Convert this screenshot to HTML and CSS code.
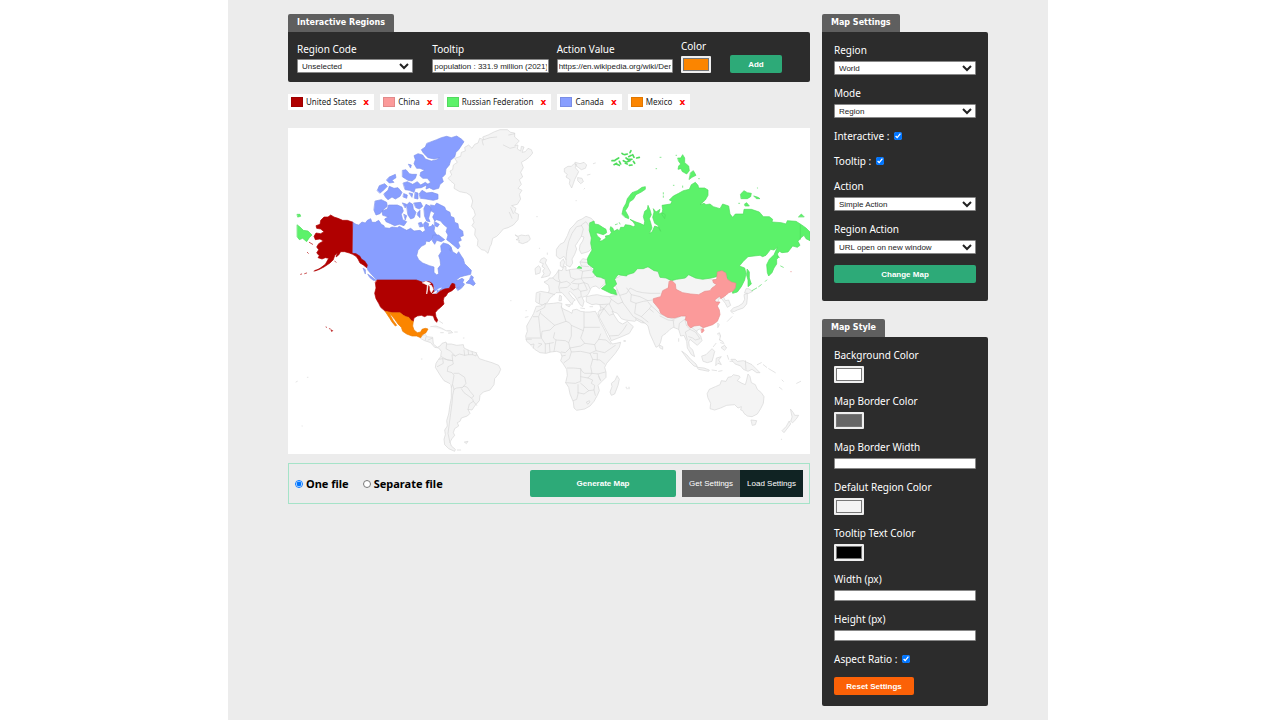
FILE: index.html
```html
<!DOCTYPE html>
<html lang="en">
<head>
    <meta charset="UTF-8">
    <meta name="viewport" content="width=device-width, initial-scale=1.0">
    <title>Interactive Map Generator</title>
    <link rel="stylesheet" href="styles.css">
</head>
<body>
    <div class="wrapper">
        <main class="main">
            <h2 class="tab">Interactive Regions</h2>
            <form class="panel region-form">
                <div class="field region-code">
                    <label for="region-code">Region Code</label>
                    <select id="region-code"><option>Unselected</option></select>
                </div>
                <div class="field">
                    <label for="tooltip-text">Tooltip</label>
                    <input type="text" id="tooltip-text" value="population : 331.9 million (2021)">
                </div>
                <div class="field">
                    <label for="action-value">Action Value</label>
                    <input type="text" id="action-value" value="https://en.wikipedia.org/wiki/Demographics">
                </div>
                <div class="field color-field">
                    <label for="region-color">Color</label>
                    <input type="color" id="region-color" value="#fb8500">
                </div>
                <button type="button" class="btn btn-add">Add</button>
            </form>

            <ul class="chips">
                <li><span class="swatch us"></span>United States<button type="button" aria-label="Remove United States">x</button></li>
                <li><span class="swatch cn"></span>China<button type="button" aria-label="Remove China">x</button></li>
                <li><span class="swatch ru"></span>Russian Federation<button type="button" aria-label="Remove Russian Federation">x</button></li>
                <li><span class="swatch ca"></span>Canada<button type="button" aria-label="Remove Canada">x</button></li>
                <li><span class="swatch mx"></span>Mexico<button type="button" aria-label="Remove Mexico">x</button></li>
            </ul>

            <svg class="map" viewBox="0 0 1566 978" role="img" aria-label="World map">
                <!-- greenland, iceland, svalbard, scandinavia, british isles -->
                <g class="land" transform="translate(576 -9)">
                    <path d="M24 30L8 36L12 44L-1 40L-6 54L-16 58L-24 70L-34 60L-46 67L-44 78L-56 82L-58 94L-76 100L-68 112L-80 120L-82 134L-90 138L-85 150L-96 160L-88 168L-76 178L-78 190L-61 200L-40 204L-28 212L-22 228L-26 245L-18 256L-14 270L-22 280L-18 292L-24 302L-14 312L-16 330L-6 345L-8 362L4 374L14 376L24 385L30 365L34 358L38 340L50 334L58 326L70 312L84 308L100 300L114 284L116 268L104 262L108 250L95 242L112 238L122 222L118 208L126 196L114 190L124 178L118 164L128 156L122 142L130 128L124 112L138 104L148 96L158 84L154 74L144 70L136 80L126 82L132 66L124 64L122 78L112 72L114 60L104 62L118 48L104 36L104 24L92 22L82 14L60 14L44 20Z"/>
                    <path d="M10 60L6 46L30 38L50 36M70 60L90 70L106 66M88 262L96 280M92 248L100 266M104 26L86 30"/>
                    <path d="M106 330L114 334L124 330L136 332L146 330L151 342L144 350L128 356L116 352L118 346L108 344L116 340Z"/>
                    <path d="M254 130L264 124L274 124L282 116L290 118L286 128L296 140L290 152L284 164L280 176L275 189L268 176L270 164L258 156L262 148L254 142ZM286 112L300 116L312 112L320 120L316 130L304 134L296 128L288 122ZM294 158L306 160L310 170L302 176L294 168ZM330 148L322 150M340 116L346 114M312 192L314 190M288 227h1M170 275h2M178 370h1M202 384v4M250 350"/>
                    <path d="M230 372L240 358L252 352L262 332L270 312L282 300L292 288L306 282L318 274L334 280L342 290L330 296L332 310L336 336L334 352L340 366L325 380L304 386L298 374L300 360L308 348L312 336L304 334L294 350L286 362L290 372L284 388L276 402L278 414L270 426L258 420L258 404L252 394L240 402L230 394Z"/>
                    <path d="M258 404L260 380L266 350L276 325L290 305L304 302M304 334L310 312L304 300L318 290L332 310"/>
                    <path d="M184 402L192 398L200 404L196 414L204 428L212 442L208 452L194 456L184 458L192 446L188 438L194 430L186 424L190 416L180 412ZM166 430L176 422L182 430L180 444L168 448ZM242 410L250 402L254 412L248 428L242 424Z"/>
                </g>
                <!-- europe and africa -->
                <g class="land" transform="translate(666 246)">
                    <path d="M80 248L92 244L115 248L118 240L116 226L102 216L114 210L118 204L128 204L140 190L146 180L156 182L162 168L168 170L168 182L184 178L206 176L214 168L210 156L218 146L236 150L244 176L258 186L262 196L284 208L286 220L276 228L268 236L258 228L248 230L242 236L236 250L230 258L216 262L222 274L218 290L210 284L202 270L194 258L180 244L176 248L186 262L196 270L190 274L186 284L180 276L168 262L156 248L138 248L130 256L120 264L112 278L98 285L88 282L78 276Z"/>
                    <path d="M90 250L88 280M115 248L134 254M128 204L138 212L150 216L146 232L150 246M146 180L146 206L152 218L170 214L182 222L172 232L150 234M178 180L182 202L196 208L184 218M206 178L218 184L214 206L196 208M214 206L222 218L206 222L188 220M218 184L244 180M222 218L232 240L212 244L204 236L206 222M204 236L190 240L182 234M212 244L214 260L204 264M214 168L236 170M210 156L236 158M216 204L250 202L258 190M222 218L234 222L240 236"/>
                    <path d="M150 256L154 258L154 272L148 272ZM168 284L182 284L178 290ZM212 294L224 296M240 290h8"/>
                    <path d="M80 289L92 288L104 282L130 280L144 278L156 280L154 292L162 298L176 304L186 310L188 300L200 298L212 304L226 306L240 306L256 304L264 318L270 334L284 360L292 378L300 392L306 402L318 400L332 397L328 412L316 430L302 446L290 460L284 472L288 486L288 502L276 514L264 526L268 542L262 556L252 574L240 588L224 597L200 601L192 594L190 576L180 552L176 532L167 518L172 496L170 478L160 462L152 452L156 440L152 428L140 424L122 426L108 430L90 428L74 418L62 404L50 394L47 378L52 364L50 348L60 330L70 312Z"/>
                    <path d="M80 305L104 292L106 282M70 320L86 320L92 304M92 310L134 346L120 360L96 364L94 384L52 384M86 322L92 380M134 346L168 334L160 310L154 290M168 334L178 338L184 346L184 378L176 398L166 392L138 390L130 384L134 368M222 306L222 352L268 352M222 352L220 362L184 346M220 362L212 384L224 400L254 404L266 388L272 372M266 388L288 390L302 402M254 404L258 422L284 428L316 406M138 390L132 424M118 400L120 426M106 402L106 428M94 384L106 402L130 398M86 400L96 402L84 412M62 404L72 402L70 414M48 388L64 388M176 398L180 414L166 428L154 426M180 414L212 408L224 400M180 414L184 426L212 424L240 430L258 422M184 426L178 446L162 458M166 436L156 438M240 430L248 448L242 470L246 490L224 490L216 484L212 476L190 474L172 474M248 448L270 450L284 462M250 430L262 430L262 450M246 490L264 492L286 486M264 492L272 512L266 500M212 476L212 514L196 520L167 518M212 500L234 504L246 490M234 504L248 510L244 520L254 526L252 540L236 542L222 528L212 520M204 524L204 552L200 568L190 572M204 548L222 552L236 542M252 540L256 556M230 576L238 572L240 576L234 582Z"/>
                    <path d="M322 498L328 508L324 526L314 552L304 556L300 546L306 530L304 520L314 512ZM342 392h4M350 536h2M356 532h2M48 302h1M46 322l8 -2M2 272h1"/>
                    <!-- middle east -->
                    <path d="M230 260L246 256L262 254L278 258L298 260L322 256L320 240L328 230L318 210L334 198L374 200L372 178L404 168L424 172L450 190L520 240L470 300L440 320L414 340L394 338L380 330L374 334L346 330L334 326L322 310L306 304L314 318L326 336L338 342L352 334L370 350L358 370L330 382L304 392L298 378L284 352L268 322L264 308L272 296L270 284L258 282L246 284L230 276Z"/>
                    <path class="water" d="M326 236L340 230L348 236L342 246L350 258L356 264L352 276L342 276L336 262L328 250Z"/>
                    <path d="M270 284L298 282L304 268L298 260M298 282L310 306M270 302L282 296L298 316L310 312M272 290L282 296L292 284M282 296L266 320M298 378L326 376L340 360L350 344M304 268L324 282L338 276M356 264L374 270L382 288L374 300L378 330M354 240L366 244L388 262L402 258L414 266M344 224L368 222L384 244L396 250L410 246L430 250M382 288L396 280L416 276L410 290L402 306L380 316M402 306L392 320L400 338"/>
                </g>
                <!-- south and east asia, oceania -->
                <g class="land" transform="translate(996 396)">
                    <path d="M-20 60L40 24L74 20L94 24L120 40L150 58L198 52L204 42L216 48L240 52L278 58L300 60L330 90L310 110L316 122L326 120L332 136L322 142L316 130L300 110L280 160L250 203L232 210L230 216L242 228L246 242L232 256L222 248L210 238L206 246L208 260L218 270L224 290L214 284L202 264L200 244L192 226L182 228L176 208L160 202L150 208L138 220L126 228L122 246L116 258L108 262L100 244L90 222L84 198L78 192L68 184L40 170L10 130Z"/>
                    <path d="M0 106L20 100L30 84L50 94L68 98L90 100L120 100M20 84L34 104L60 110L84 122L98 120M34 104L32 124L48 130L70 124L84 122M48 130L44 160L64 170L88 146L94 138L84 126M64 170L84 186M94 138L108 150L120 162L160 178L180 170M88 146L100 156M120 168L144 180L162 182M160 184L162 202M176 208L178 190L194 178M194 178L200 198L210 208L196 216L202 240M210 208L226 216L240 236L226 240L218 234L206 230M214 202L230 214"/>
                    <path d="M120 256L128 260L128 268L120 264ZM176 236v8M186 274L200 284L212 298L228 312L232 320L222 318L206 302ZM232 322L252 324L268 330L266 334L236 328ZM276 330L290 332M296 334L306 332M246 288L258 284L268 274L276 266L284 274L280 290L276 304L262 308L250 304ZM290 294L304 290L296 300L304 314L294 310L288 316ZM292 222L298 218L302 228L298 240L308 244L312 252M302 248L308 250M304 262L314 256L320 264L314 270ZM280 260L288 250M322 286L326 298M330 304h8M334 298L346 298L352 304L370 302L396 314L408 326L420 338L410 338L396 328L384 334L370 328L362 318L346 312ZM376 302L378 328M412 314L424 308M430 314L440 322M446 326L466 338M478 382L486 388M530 370L542 364M486 360l4 4M294 190L298 194L294 202ZM322 184L336 170"/>
                    <path d="M332 152L340 144L356 138L368 130L374 118L372 104L382 100L382 114L380 132L370 144L352 150L344 154ZM374 98L378 86L386 86L398 94L386 100ZM334 156L340 160"/>
                    <path d="M262 400L268 388L286 380L300 374L304 362L318 364L324 352L334 350L340 344L358 348L360 352L352 362L366 370L376 374L380 360L384 342L390 350L394 368L406 374L412 388L424 398L432 410L430 430L422 446L412 462L396 470L382 468L372 460L368 452L362 450L364 440L354 444L344 434L320 436L302 444L284 450L270 446L272 430L264 414ZM394 480L410 482L406 494L398 496Z"/>
                    <path d="M512 448L520 458L524 466L536 466L528 478L518 488L512 484L516 472ZM508 484L512 492L500 508L492 518L486 512L498 500ZM18 382h2M26 386h2M484 538h1M12 244h4"/>
                </g>
                <!-- central and south america -->
                <g class="land" transform="translate(0 366)">
                    <path d="M398 264L404 256L414 254L416 260L434 262L436 282L448 292L456 288L462 280L474 276L476 282L490 282L506 286L526 284L528 294L544 302L564 308L574 326L592 332L612 338L632 346L638 358L632 372L620 386L618 404L606 420L586 426L576 436L574 452L560 468L552 480L540 478L546 490L538 498L520 504L516 514L508 518L512 528L500 536L496 548L500 556L492 566L486 576L490 588L502 598L500 604L482 596L470 584L468 568L472 554L470 540L478 528L476 512L482 492L486 464L490 444L490 412L488 402L468 392L458 378L442 352L444 340L452 328L458 320L460 304L452 294L440 292L428 278L410 272Z"/>
                    <path d="M414 260L412 270M420 270L434 264M460 320L478 330L494 332L496 342L480 350L478 364L492 368L498 376L494 400L490 412M452 328L464 326L466 340L448 350M464 326L494 332M494 332L492 314L502 318L514 312L530 316L528 300M476 282L474 296L488 304L502 318M540 300L542 314L530 316M552 304L554 314L542 314M566 308L564 318L554 314M498 370L512 370L530 382L534 400L524 412L506 414L498 418L494 404M524 412L528 408L538 412L546 424L558 438L550 444L528 428L520 416M550 444L554 448L556 454L544 462L540 478M556 454L566 466M498 418L494 436L492 460L488 490L484 520L480 550L486 578"/>
                    <path d="M428 230L444 228L460 234L474 242M476 242L488 242L494 248L482 250M458 248L466 248M500 246h8M452 212L464 220M526 264h2M400 327h2M24 396L28 394M58 382h2M42 528h1M530 576L540 574L536 580ZM508 600h10"/>
                </g>
                <!-- canada -->
                <g class="canada" transform="translate(0 -9)">
                    <path d="M193 291L204 298L212 300L222 291L232 294L238 286L248 281L252 292L262 292L272 286L280 298L288 302L290 308L304 310L312 306L328 308L334 304L348 312L356 316L368 310L378 318L396 316L404 322L412 316L406 298L412 290L422 296L420 306L430 304L434 298L440 306L438 318L446 330L434 340L424 350L414 348L412 358L400 364L390 376L386 392L392 404L404 414L424 422L438 426L438 442L446 450L452 446L450 430L458 420L456 404L452 392L460 380L458 362L466 354L480 358L488 364L494 380L506 388L512 380L518 390L526 402L530 416L544 430L550 436L548 448L530 452L516 456L504 466L510 466L522 460L528 464L524 472L530 478L518 484L508 492L504 484L500 476L492 480L488 488L474 492L460 494L446 504L438 508L436 498L440 488L430 478L416 474L402 472L386 465L266 465L258 456L250 448L240 436L236 424L226 410L214 398L204 388L193 385Z"/>
                    <path d="M550 452L556 456L554 464L562 476L556 482L546 476L534 474L544 464ZM506 488L516 486L528 480L520 490L510 496ZM226 430L232 434L232 446ZM240 448L252 456L264 466L256 466L246 458Z"/>
                    <path d="M430 50L446 44L460 38L476 34L490 38L506 33L520 42L528 50L520 62L512 74L504 82L500 96L488 106L484 120L474 132L472 148L462 158L466 170L456 178L452 190L436 194L424 188L414 192L416 180L428 172L418 160L404 160L396 152L398 142L410 136L396 130L386 130L378 116L382 104L378 92L390 86L404 90L412 102L430 108L446 104L454 98L438 102L420 98L406 84L400 74L412 66L416 56Z"/>
                    <path d="M394 206L402 196L416 204L432 202L450 208L450 222L436 226L414 222L398 220ZM344 136L354 134L364 146L372 148L386 148L382 160L372 168L360 166L344 156ZM362 118L370 120L368 128ZM346 174L358 170L374 178L388 170L398 180L412 172L420 178L400 188L382 190L378 202L364 196L352 194ZM304 156L322 148L324 158L312 166L318 172L304 174L296 166ZM268 196L274 182L290 176L298 184L284 198L276 204ZM288 206L300 196L304 184L318 190L330 188L342 202L336 214L322 222L312 216L300 224L292 216ZM348 206L358 210L356 220L346 216ZM364 204L374 206L372 216ZM382 202L390 204L390 222L380 220Z"/>
                    <path d="M262 228L280 224L296 232L298 244L286 254L276 266L264 270L258 256ZM284 270L282 258L298 252L302 240L316 240L328 240L342 246L346 258L340 268L344 284L356 290L348 302L334 298L320 302L308 296L294 290L290 282L300 276ZM344 234L356 238L352 248ZM356 240L364 232L374 238L376 252L384 262L378 278L368 282L360 270ZM378 234L398 232L404 244L394 252L384 248ZM390 262L396 256L396 278L388 270ZM392 294L400 292L406 304L396 306ZM348 268L356 272L352 284Z"/>
                    <path d="M408 250L414 238L426 244L430 254L426 264L422 280L426 290L416 288L410 274ZM428 240L440 242L446 234L458 240L470 246L474 256L486 262L488 274L498 278L500 292L510 296L512 310L524 318L526 332L516 336L520 346L510 350L516 364L510 372L496 360L484 350L476 344L480 330L474 320L478 308L466 298L458 288L446 284L440 288L434 276L440 264L430 258ZM440 290L454 298L448 306L440 302ZM436 330L452 330L470 344L460 350L446 346L440 358L432 346ZM484 372L490 368L488 378Z"/>
                </g>
                <!-- united states -->
                <g class="usa" transform="translate(0 -9)">
                    <path d="M193 291L178 286L164 286L150 280L138 276L128 270L120 276L108 276L98 286L96 298L84 302L86 310L98 312L108 320L98 326L84 324L78 334L82 344L96 342L106 348L92 356L86 366L92 374L86 384L94 392L90 398L102 402L112 398L122 400L112 418L96 430L80 438L92 434L108 426L126 414L136 404L140 392L148 384L144 396L152 390L158 380L170 380L184 384L194 388L204 394L210 402L216 414L226 420L236 428L238 420L230 408L220 402L216 394L204 386L193 385Z"/>
                    <path d="M64 352L74 358M58 382l3 3M38 448l3 -1M50 446l6 -2M78 438l6 -3M140 408l4 4"/>
                </g>
                <g class="usa" transform="translate(0 366)">
                    <path d="M268 90L385 90L396 94L404 97L414 94L426 96L434 102L436 112L438 124L436 132L446 132L458 122L470 117L484 115L488 106L492 100L500 102L502 113L492 122L480 128L474 138L468 142L466 152L468 162L458 172L448 180L442 188L444 200L449 210L446 217L440 210L436 198L426 196L418 196L410 200L400 196L388 198L378 204L376 214L370 212L362 202L354 200L346 196L336 188L312 188L292 184L278 172L272 160L264 146L260 130L264 114L262 98Z"/>
                    <path class="lake" d="M404 98L414 94L428 100L420 106L418 122L416 132L418 106ZM422 104L430 106L436 118L430 128L426 120L426 110ZM434 130L446 122L444 128ZM450 118L460 114L452 120Z"/>
                    <path d="M114 231l2 1M124 236l3 1M130 240L134 242L132 244Z"/>
                </g>
                <path class="mexico" transform="translate(0 366)" d="M292 184L312 188L336 188L346 196L354 200L362 202L370 212L376 214L374 228L378 240L388 248L398 246L402 238L412 235L420 237L414 248L406 253L402 256L398 263L386 258L372 258L356 252L344 244L340 232L330 222L320 208L310 196L304 188L308 198L316 212L326 226L322 228L312 216L306 206L298 194Z"/>
                <!-- russia -->
                <g class="russia" transform="translate(876 36)">
                    <path d="M30 248L42 243L44 252L56 254L68 262L78 268L80 278L70 284L56 280L48 278L52 288L62 296L58 304L66 302L78 294L76 288L88 286L94 278L90 268L92 260L98 264L102 274L112 268L118 272L122 262L132 262L136 254L150 256L160 260L166 256L160 246L150 238L168 246L180 250L192 256L194 244L190 230L194 214L202 208L204 196L210 210L214 224L208 236L212 248L216 264L208 280L216 276L224 258L236 262L242 274L234 256L224 250L218 232L222 216L220 206L228 216L240 208L236 222L246 218L256 224L254 236L246 224L248 208L246 196L272 192L276 184L268 180L280 168L296 160L310 152L328 148L334 134L346 127L354 136L356 144L374 144L384 150L384 166L376 180L360 194L372 190L378 194L390 192L400 200L420 206L428 192L446 198L450 222L458 232L466 222L490 222L492 208L514 208L538 216L550 230L568 230L578 238L576 246L604 248L618 252L622 242L648 244L664 254L678 264L690 276L690 302L678 296L672 286L662 294L654 304L660 316L652 322L638 318L624 336L606 338L598 334L592 342L596 352L590 358L590 372L582 384L576 398L566 408L562 398L560 374L568 358L582 344L592 322L582 330L572 328L558 346L548 350L540 346L504 350L490 364L478 378L494 384L498 400L494 420L484 440L472 456L458 460L456 446L468 432L458 432L444 422L436 398L424 392L414 398L410 410L394 414L368 418L346 414L326 404L316 414L290 418L274 422L258 414L240 412L234 394L222 392L204 380L190 386L172 386L162 398L142 404L140 408L114 404L104 418L110 432L98 444L106 450L110 464L92 460L64 446L78 434L76 418L62 412L50 410L38 396L42 386L24 372L22 356L28 344L36 330L32 310L34 294L28 272Z"/>
                    <path d="M126 222L130 204L138 190L142 176L156 158L172 152L186 142L196 140L196 148L184 156L168 164L160 178L148 186L144 200L136 212L146 230L146 236L136 232Z"/>
                    <path d="M294 54L302 54L308 44L314 54L314 68L326 78L328 92L320 102L306 94L304 86L294 88L296 78L302 72L296 64ZM332 98L340 92L348 106L336 112L328 118ZM482 162L492 152L502 158L514 160L512 170L502 176L484 176ZM522 168L534 172L540 176L530 176ZM494 192L500 188L508 198L496 198ZM656 230L664 222L672 230ZM502 388L508 396L508 414L514 432L504 440L504 420L500 406Z"/>
                    <path class="isles" d="M96 62l8 0M106 60l10 -6M102 74l8 -4M108 72l10 4M118 64l4 8M126 40l4 3M134 44l8 -2M138 54l8 6M146 50l8 -4M140 66l10 -4M136 70l6 2M150 38l3 -6M158 44l4 8M160 64l4 6M148 76l8 -1M170 54l8 -2M146 58l10 0M130 62l6 3"/>
                    <path d="M240 52h3M228 86h2M288 46h2M356 116h2M532 144h1M476 190h3M250 158v4M250 168v4M280 136h2M308 138v4M106 254l6 -2M118 248l2 4M516 452L530 444M536 440L544 434M556 424l4 -4M602 378L610 382M592 350l6 2M0 384h3"/>
                </g>
                <g class="russia" transform="translate(0 -9)">
                    <path d="M28 300L36 306L46 316L60 318L72 330L64 338L56 350L44 340L34 344L28 336ZM28 268L36 268L38 274L30 276ZM868 429L873 423L881 429Z"/>
                </g>
                <path class="seam" d="M1537 290V334"/>
                <!-- china -->
                <g class="china" transform="translate(996 396)">
                    <path d="M148 64L156 62L166 72L168 88L188 98L212 102L236 104L254 94L270 92L276 84L290 74L280 68L278 60L290 58L292 36L306 32L318 40L320 56L334 66L348 70L346 84L338 94L326 98L318 106L302 116L300 108L284 120L288 126L300 126L292 138L298 150L300 164L292 184L278 194L266 198L250 203L238 196L222 198L212 204L204 196L202 184L196 180L198 168L184 168L162 174L142 172L122 160L118 148L110 138L100 126L100 116L122 110L128 92L144 84Z"/>
                    <path d="M244 208L250 206L252 212L246 218ZM512 35h2"/>
                </g>
            </svg>

            <div class="actions">
                <label class="choice"><input type="radio" name="output" checked>One file</label>
                <label class="choice"><input type="radio" name="output">Separate file</label>
                <button type="button" class="btn btn-generate">Generate Map</button>
                <div class="btn-group">
                    <button type="button" class="btn-get">Get Settings</button>
                    <button type="button" class="btn-load">Load Settings</button>
                </div>
            </div>
        </main>

        <aside class="sidebar">
            <section>
                <h2 class="tab">Map Settings</h2>
                <div class="panel settings map-settings">
                    <div class="field">
                        <label for="region">Region</label>
                        <select id="region"><option>World</option></select>
                    </div>
                    <div class="field">
                        <label for="mode">Mode</label>
                        <select id="mode"><option>Region</option></select>
                    </div>
                    <div class="check">
                        <label for="interactive">Interactive :</label>
                        <input type="checkbox" id="interactive" checked>
                    </div>
                    <div class="check">
                        <label for="tooltip">Tooltip :</label>
                        <input type="checkbox" id="tooltip" checked>
                    </div>
                    <div class="field">
                        <label for="action">Action</label>
                        <select id="action"><option>Simple Action</option></select>
                    </div>
                    <div class="field">
                        <label for="region-action">Region Action</label>
                        <select id="region-action"><option>URL open on new window</option></select>
                    </div>
                    <button type="button" class="btn">Change Map</button>
                </div>
            </section>
            <section>
                <h2 class="tab">Map Style</h2>
                <div class="panel settings">
                    <div class="field">
                        <label for="bg-color">Background Color</label>
                        <input type="color" id="bg-color" value="#ffffff">
                    </div>
                    <div class="field">
                        <label for="border-color">Map Border Color</label>
                        <input type="color" id="border-color" value="#666666">
                    </div>
                    <div class="field">
                        <label for="border-width">Map Border Width</label>
                        <input type="text" id="border-width">
                    </div>
                    <div class="field">
                        <label for="default-color">Defalut Region Color</label>
                        <input type="color" id="default-color" value="#f4f4f4">
                    </div>
                    <div class="field">
                        <label for="tooltip-color">Tooltip Text Color</label>
                        <input type="color" id="tooltip-color" value="#000000">
                    </div>
                    <div class="field">
                        <label for="width">Width (px)</label>
                        <input type="text" id="width">
                    </div>
                    <div class="field">
                        <label for="height">Height (px)</label>
                        <input type="text" id="height">
                    </div>
                    <div class="check">
                        <label for="aspect">Aspect Ratio :</label>
                        <input type="checkbox" id="aspect" checked>
                    </div>
                    <button type="button" class="btn btn-reset">Reset Settings</button>
                </div>
            </section>
        </aside>
    </div>
</body>
</html>
```
FILE: styles.css
```css
* {
    margin: 0;
    padding: 0;
    box-sizing: border-box;
}
body {
    padding-right: 4px;
    background: #fff;
    font-family: "Noto Sans", sans-serif;
    font-size: 10px;
    line-height: 14px;
}
.wrapper {
    display: grid;
    grid-template-columns: minmax(0, 1fr) 166px;
    gap: 12px;
    align-items: start;
    max-width: 820px;
    min-height: 100vh;
    margin: 0 auto;
    padding: 14px 60px;
    background: #ececec;
}
.sidebar {
    display: grid;
    gap: 18px;
}

/* panels */
.tab {
    width: fit-content;
    padding: 0 9px;
    border-radius: 2px 2px 0 0;
    background: #5f5f5f;
    color: #fff;
    font-family: "DejaVu Sans", sans-serif;
    font-size: 8px;
    line-height: 18px;
}
.panel {
    background: #2c2c2c;
    color: #fff;
    border-radius: 0 2px 2px 2px;
}
.settings {
    display: flex;
    flex-direction: column;
    gap: 11px;
    padding: 11px 12px;
}
.map-settings {
    padding-bottom: 18px;
}
.region-form {
    display: flex;
    align-items: flex-end;
    gap: 8px;
    padding: 7px 28px 9px 9px;
}
.region-form .field {
    flex: 1;
    min-width: 0;
    gap: 3px;
}
.region-form .region-code {
    margin-right: 11px;
}
.region-form .color-field {
    flex: none;
}
.field {
    display: flex;
    flex-direction: column;
    gap: 4px;
}
.check {
    display: flex;
    align-items: center;
    gap: 5px;
}

/* controls */
select,
input[type="text"] {
    width: 100%;
    border: 1px solid #888;
    border-radius: 1px;
    background: #fff;
    color: #222;
    font-family: "Liberation Sans", sans-serif;
    font-size: 8px;
}
select {
    height: 14px;
}
input[type="text"] {
    height: 11px;
    padding: 0 1px;
}
.region-form input[type="text"] {
    height: 14px;
}
input[type="color"] {
    width: 30px;
    height: 17px;
    padding: 0;
    border: 2px solid #efefef;
    border-radius: 1px;
    background: #efefef;
}
input[type="color"]::-webkit-color-swatch-wrapper {
    padding: 0;
}
input[type="color"]::-webkit-color-swatch {
    border: 1px solid #777;
}
input[type="checkbox"],
input[type="radio"] {
    width: 8px;
    height: 8px;
}
button {
    border: 0;
    color: #fff;
    font-family: "Liberation Sans", sans-serif;
    font-size: 8px;
    font-weight: bold;
}
.btn {
    height: 18px;
    border-radius: 2px;
    background: #2daa78;
}
.btn-add {
    width: 52px;
    margin-left: 11px;
}
.btn-reset {
    width: 80px;
    background: #fb6107;
}

/* selected regions */
.chips {
    display: flex;
    flex-wrap: wrap;
    gap: 6px;
    margin: 12px 0 18px;
    list-style: none;
    font-size: 8px;
    color: #222;
}
.chips li {
    display: flex;
    align-items: center;
    height: 16px;
    padding: 0 3px;
    background: #fff;
}
.chips button {
    width: 10px;
    margin-left: 5px;
    background: none;
    color: #f00;
    font-family: "DejaVu Sans", sans-serif;
    font-size: 9px;
}
.swatch {
    width: 12px;
    height: 10px;
    margin-right: 3px;
    border: 1px solid rgba(0, 0, 0, 0.1);
}
.us { background: #b00000; }
.cn { background: #fb9a9a; }
.ru { background: #5cf26a; }
.ca { background: #889eff; }
.mx { background: #fb8500; }

/* map */
.map {
    display: block;
    width: 100%;
    background: #fff;
    stroke-width: 2;
    stroke-linejoin: round;
    stroke-linecap: round;
}
.land {
    fill: #f4f4f4;
    stroke: #d6d6d6;
}
.water,
.lake {
    fill: #fff;
}
.lake {
    stroke: #fff;
}
.canada {
    fill: #889eff;
    stroke: #7f93ea;
}
.usa {
    fill: #b00000;
    stroke: #b00000;
}
.mexico {
    fill: #fb8500;
    stroke: #ea7c00;
}
.russia {
    fill: #5cf26a;
    stroke: #4fdc5c;
}
.isles {
    stroke-width: 5;
}
.seam {
    stroke: #4fdc5c;
}
.china {
    fill: #fb9a9a;
    stroke: #e88c8c;
}

/* bottom bar */
.actions {
    display: flex;
    align-items: center;
    margin-top: 9px;
    padding: 6px;
    border: 1px solid #a5e3c8;
}
.choice {
    display: flex;
    align-items: center;
    gap: 3px;
    margin-right: 14px;
    font-size: 11px;
    font-weight: bold;
}
.btn-generate {
    width: 146px;
    height: 27px;
    margin-left: auto;
    margin-right: 6px;
}
.btn-group {
    display: flex;
}
.btn-group button {
    height: 27px;
    padding: 0 7px;
    font-weight: normal;
}
.btn-get {
    background: #5f5f5f;
}
.btn-load {
    background: #102323;
}
```
